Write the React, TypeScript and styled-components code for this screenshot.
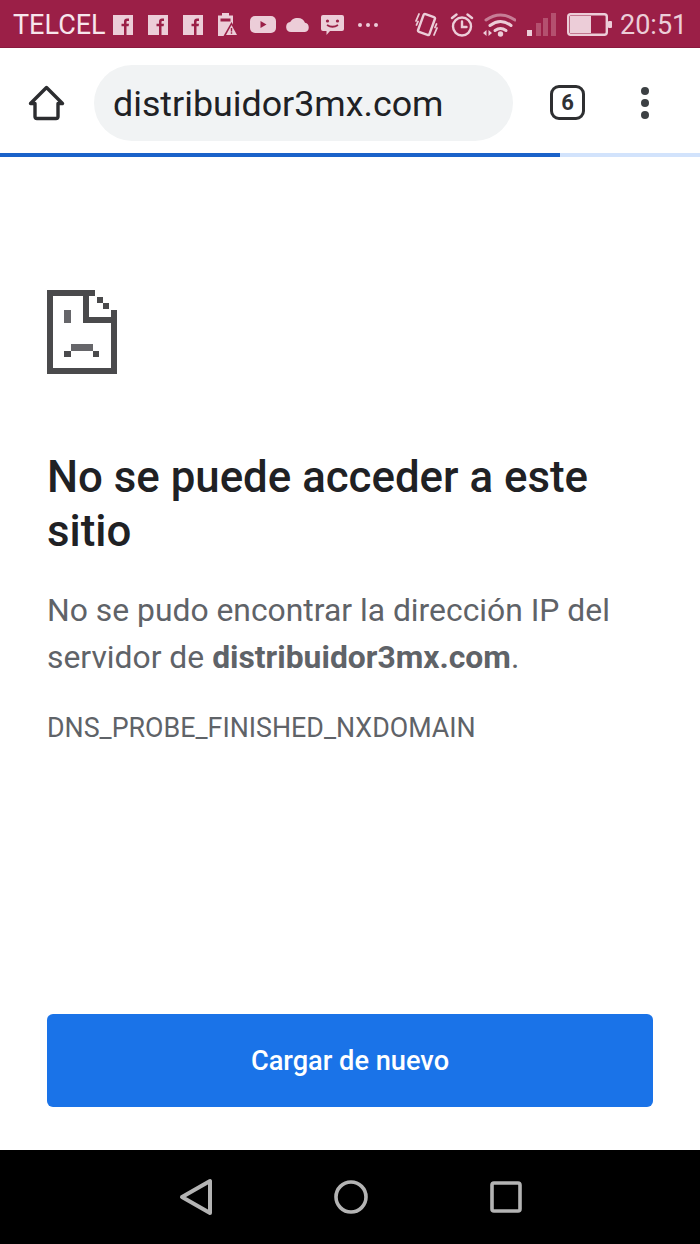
import React from "react";
import styled, { createGlobalStyle } from "styled-components";

const Global = createGlobalStyle`
  html, body { margin: 0; padding: 0; background: #fff; }
  body { font-family: Roboto, "Liberation Sans", sans-serif; }
  * { box-sizing: border-box; }
`;

const Page = styled.div`
  width: 700px;
  height: 1244px;
  display: flex;
  flex-direction: column;
  overflow: hidden;
  background: #fff;
`;

const StatusBar = styled.div`
  height: 48px;
  flex: none;
  background: #9b1f47;
  border-bottom: 1px solid #8a1a3e;
  padding: 2px 13px 0 13px;
  display: flex;
  align-items: center;
  color: #f3dbe3;
`;

const Carrier = styled.span`
  font-size: 27px;
  line-height: 46px;
  color: #f7e6ec;
  width: 100px;
  flex: none;
`;

const Clock = styled.span`
  font-size: 27px;
  line-height: 46px;
  color: #eccdd8;
  margin-left: 8px;
  flex: none;
`;

const StatusIcon = styled.svg<{ $ml: number }>`
  display: block;
  flex: none;
  margin-left: ${(p) => p.$ml}px;
`;

const Toolbar = styled.div`
  height: 105px;
  flex: none;
  display: flex;
  align-items: center;
  padding: 4px 0 0 28px;
`;

const ToolIcon = styled.svg`
  display: block;
  flex: none;
`;

const AddressPill = styled.div`
  width: 419px;
  height: 76px;
  margin-left: 29px;
  border-radius: 38px;
  background: #f1f3f4;
  display: flex;
  align-items: center;
  padding: 2px 0 0 19px;
  font-size: 35.8px;
  color: #202124;
  flex: none;
`;

const TabCount = styled.div`
  width: 35px;
  height: 35px;
  margin-left: 37px;
  border: 3px solid #2e2f31;
  border-radius: 9px;
  display: flex;
  align-items: center;
  justify-content: center;
  font-size: 22px;
  font-weight: 700;
  color: #303134;
  flex: none;
`;

const Dots = styled.div`
  margin-left: 56px;
  display: flex;
  flex-direction: column;
  gap: 4px;
  flex: none;
`;

const Dot = styled.span`
  width: 8px;
  height: 8px;
  border-radius: 50%;
  background: #3c4043;
`;

const ProgressTrack = styled.div`
  height: 4px;
  flex: none;
  background: #d2e3fc;
`;

const ProgressFill = styled.div`
  height: 100%;
  background: #1a62c9;
`;

const Content = styled.main`
  flex: 1;
  display: flex;
  flex-direction: column;
  padding: 133px 47px 43px;
`;

const SadPage = styled.svg`
  display: block;
  flex: none;
`;

const Heading = styled.h1`
  margin: 76px 0 0;
  font-size: 43.8px;
  line-height: 54px;
  font-weight: 500;
  color: #202124;
`;

const Message = styled.p`
  margin: 29px 0 0;
  font-size: 31.85px;
  line-height: 47px;
  font-weight: 400;
  color: #5f6368;
`;

const Strong = styled.strong`
  font-weight: 700;
`;

const ErrorCode = styled.div`
  margin-top: 29px;
  font-size: 26.8px;
  line-height: 36px;
  color: #5f6368;
`;

const ReloadButton = styled.button`
  margin-top: auto;
  height: 93px;
  width: 100%;
  flex: none;
  border: 0;
  border-radius: 6px;
  background: #1a73e8;
  color: #fff;
  font-family: inherit;
  font-size: 27.2px;
  font-weight: 500;
`;

const NavBar = styled.nav`
  height: 94px;
  flex: none;
  background: #000;
  display: flex;
  align-items: center;
  padding: 0 0 0 179px;
`;

const NavIcon = styled.svg<{ $ml?: number }>`
  display: block;
  flex: none;
  margin-left: ${(p) => p.$ml ?? 0}px;
`;

const FacebookIcon = ({ ml }: { ml: number }) => (
  <StatusIcon $ml={ml} width="20" height="20" viewBox="0 0 20 20">
    <path
      fill="#eccdd8"
      fillRule="evenodd"
      d="M0 0h20v20H0z M11 20V11.300H8.500V8.700H11V6.500C11 4.500 12.200 3.500 14 3.500H16V6H14.600C13.800 6 13.500 6.300 13.500 7V8.700H16L15.600 11.300H13.500V20z"
    />
  </StatusIcon>
);

export default function App() {
  return (
    <Page>
      <Global />
      <StatusBar>
        <Carrier>TELCEL</Carrier>
        <FacebookIcon ml={0} />
        <FacebookIcon ml={15} />
        <FacebookIcon ml={15} />
        <StatusIcon $ml={15} width="21" height="23" viewBox="0 0 21 23">
          <path fill="#eccdd8" d="M4 0h7v2.500h4V23H0V2.500h4z" />
          <path fill="#9b1f47" d="M2.500 5.500h10v3h-10z" />
          <path fill="#9b1f47" d="M13.500 9 21.500 23H5.500z" />
          <path fill="#eccdd8" d="M13.500 12 19 22H8z" />
          <path fill="#9b1f47" d="M12.800 15h1.400v3.500h-1.400zM12.800 19.300h1.400v1.400h-1.400z" />
        </StatusIcon>
        <StatusIcon $ml={11} width="26" height="17" viewBox="0 0 26 17">
          <rect width="26" height="17" rx="5" fill="#eccdd8" />
          <path d="M10.500 5v7l6-3.500z" fill="#9b1f47" />
        </StatusIcon>
        <StatusIcon $ml={10} width="24" height="14" viewBox="0 0 24 14">
          <path
            fill="#eccdd8"
            d="M5 14a5 5 0 0 1-.8-9.900A8 8 0 0 1 12 0a7.500 7.500 0 0 1 7 4.800A4.700 4.700 0 0 1 19 14z"
          />
        </StatusIcon>
        <StatusIcon $ml={11} width="23" height="20" viewBox="0 0 23 20">
          <path fill="#eccdd8" d="M2 0h19a2 2 0 0 1 2 2v12a2 2 0 0 1-2 2H9l-3.500 4v-4H2a2 2 0 0 1-2-2V2a2 2 0 0 1 2-2z" />
          <circle cx="6.500" cy="6" r="1.600" fill="#9b1f47" />
          <circle cx="16.500" cy="6" r="1.600" fill="#9b1f47" />
          <path d="M6 10q5.500 3.500 11 0" stroke="#9b1f47" strokeWidth="1.800" fill="none" />
        </StatusIcon>
        <StatusIcon $ml={14} width="20" height="4" viewBox="0 0 20 4">
          <circle cx="2" cy="2" r="2" fill="#eccdd8" />
          <circle cx="10" cy="2" r="2" fill="#eccdd8" />
          <circle cx="18" cy="2" r="2" fill="#eccdd8" />
        </StatusIcon>
        <StatusIcon $ml={37} width="23" height="25" viewBox="0 0 23 25">
          <g fill="none" stroke="#eccdd8" strokeLinecap="round">
            <rect x="5.500" y="3" width="12" height="19" rx="1.500" strokeWidth="2.400" transform="rotate(20 11.500 12.500)" />
            <path d="M1 9 4 2M1.500 13l1.500-3.500M22 16l-3 7M21.500 12 20 15.500" strokeWidth="1.800" />
          </g>
        </StatusIcon>
        <StatusIcon $ml={12} width="24" height="24" viewBox="0 0 24 24">
          <g fill="none" stroke="#eccdd8" strokeWidth="2.400" strokeLinecap="round">
            <circle cx="12" cy="13.500" r="9" />
            <path d="M12 8.500v5.500h4.500M2 5l4.500-3.500M22 5 17.500 1.500" />
          </g>
        </StatusIcon>
        <StatusIcon $ml={9} width="33" height="24" viewBox="0 0 33 24">
          <g fill="none" strokeLinecap="round" strokeWidth="3">
            <path d="M3 7Q17.500-3 32 7" stroke="#c77d96" />
            <path d="M7 12.500q10.500-8 21 0" stroke="#eccdd8" />
            <path d="M12 17.500q5.500-4 11 0" stroke="#eccdd8" />
          </g>
          <circle cx="17.500" cy="21" r="2.700" fill="#eccdd8" />
          <path fill="#eccdd8" d="M0 20l3.500-3v6zM9 20l-3.500-3v6z" />
        </StatusIcon>
        <StatusIcon $ml={11} width="29" height="23" viewBox="0 0 29 23">
          <rect x="0" y="17" width="5" height="6" fill="#eccdd8" />
          <rect x="9" y="10" width="5" height="13" fill="#b4506f" />
          <rect x="16" y="5" width="5" height="18" fill="#b4506f" />
          <rect x="24" y="0" width="5" height="23" fill="#b4506f" />
        </StatusIcon>
        <StatusIcon $ml={11} width="45" height="23" viewBox="0 0 45 23">
          <rect x="1.200" y="1.200" width="38.600" height="20.600" rx="2.500" fill="none" stroke="#eccdd8" strokeWidth="2.400" />
          <rect x="3" y="3" width="21" height="17" fill="#eccdd8" />
          <rect x="41" y="8" width="4" height="7" rx="1" fill="#eccdd8" />
        </StatusIcon>
        <Clock>20:51</Clock>
      </StatusBar>

      <Toolbar>
        <ToolIcon width="37" height="36" viewBox="0 0 37 36">
          <path
            d="M2.500 18.500 18.500 2.500l16 16h-4.500v13a2 2 0 0 1-2 2H9a2 2 0 0 1-2-2v-13z"
            fill="none"
            stroke="#2c2d30"
            strokeWidth="3.400"
            strokeLinejoin="round"
          />
        </ToolIcon>
        <AddressPill>distribuidor3mx.com</AddressPill>
        <TabCount>6</TabCount>
        <Dots>
          <Dot />
          <Dot />
          <Dot />
        </Dots>
      </Toolbar>

      <ProgressTrack>
        <ProgressFill style={{ width: `${(560 / 700) * 100}%` }} />
      </ProgressTrack>

      <Content>
        <SadPage width="70" height="84" viewBox="0 0 70 84" shapeRendering="crispEdges">
          <path
            fill="#4a4a4c"
            fillRule="evenodd"
            d="M0 0h48v6H42v21h22v-7h6v64H0z M6 6v72h58V33H36V6z"
          />
          <path fill="#4a4a4c" d="M50 7h6v6h-6zM56 13h6v6h-6z" />
          <path fill="#66666a" d="M17 20h7v13h-7z" />
          <path fill="#66666a" d="M24 54h22v7H24z" />
          <path fill="#4a4a4c" d="M17 61h7v6h-7zM46 61h6v6h-6z" />
        </SadPage>
        <Heading>No se puede acceder a este sitio</Heading>
        <Message>
          No se pudo encontrar la dirección IP del servidor de <Strong>distribuidor3mx.com</Strong>.
        </Message>
        <ErrorCode>DNS_PROBE_FINISHED_NXDOMAIN</ErrorCode>
        <ReloadButton>Cargar de nuevo</ReloadButton>
      </Content>

      <NavBar>
        <NavIcon width="34" height="38" viewBox="0 0 34 38">
          <path
            d="M31 3v32L3 19z"
            fill="none"
            stroke="#b4b4b4"
            strokeWidth="4"
            strokeLinejoin="round"
          />
        </NavIcon>
        <NavIcon $ml={121} width="34" height="34" viewBox="0 0 34 34">
          <circle cx="17" cy="17" r="15" fill="none" stroke="#b4b4b4" strokeWidth="3.600" />
        </NavIcon>
        <NavIcon $ml={122} width="32" height="32" viewBox="0 0 32 32">
          <rect x="2" y="2" width="28" height="28" rx="2" fill="none" stroke="#b4b4b4" strokeWidth="3.600" />
        </NavIcon>
      </NavBar>
    </Page>
  );
}
